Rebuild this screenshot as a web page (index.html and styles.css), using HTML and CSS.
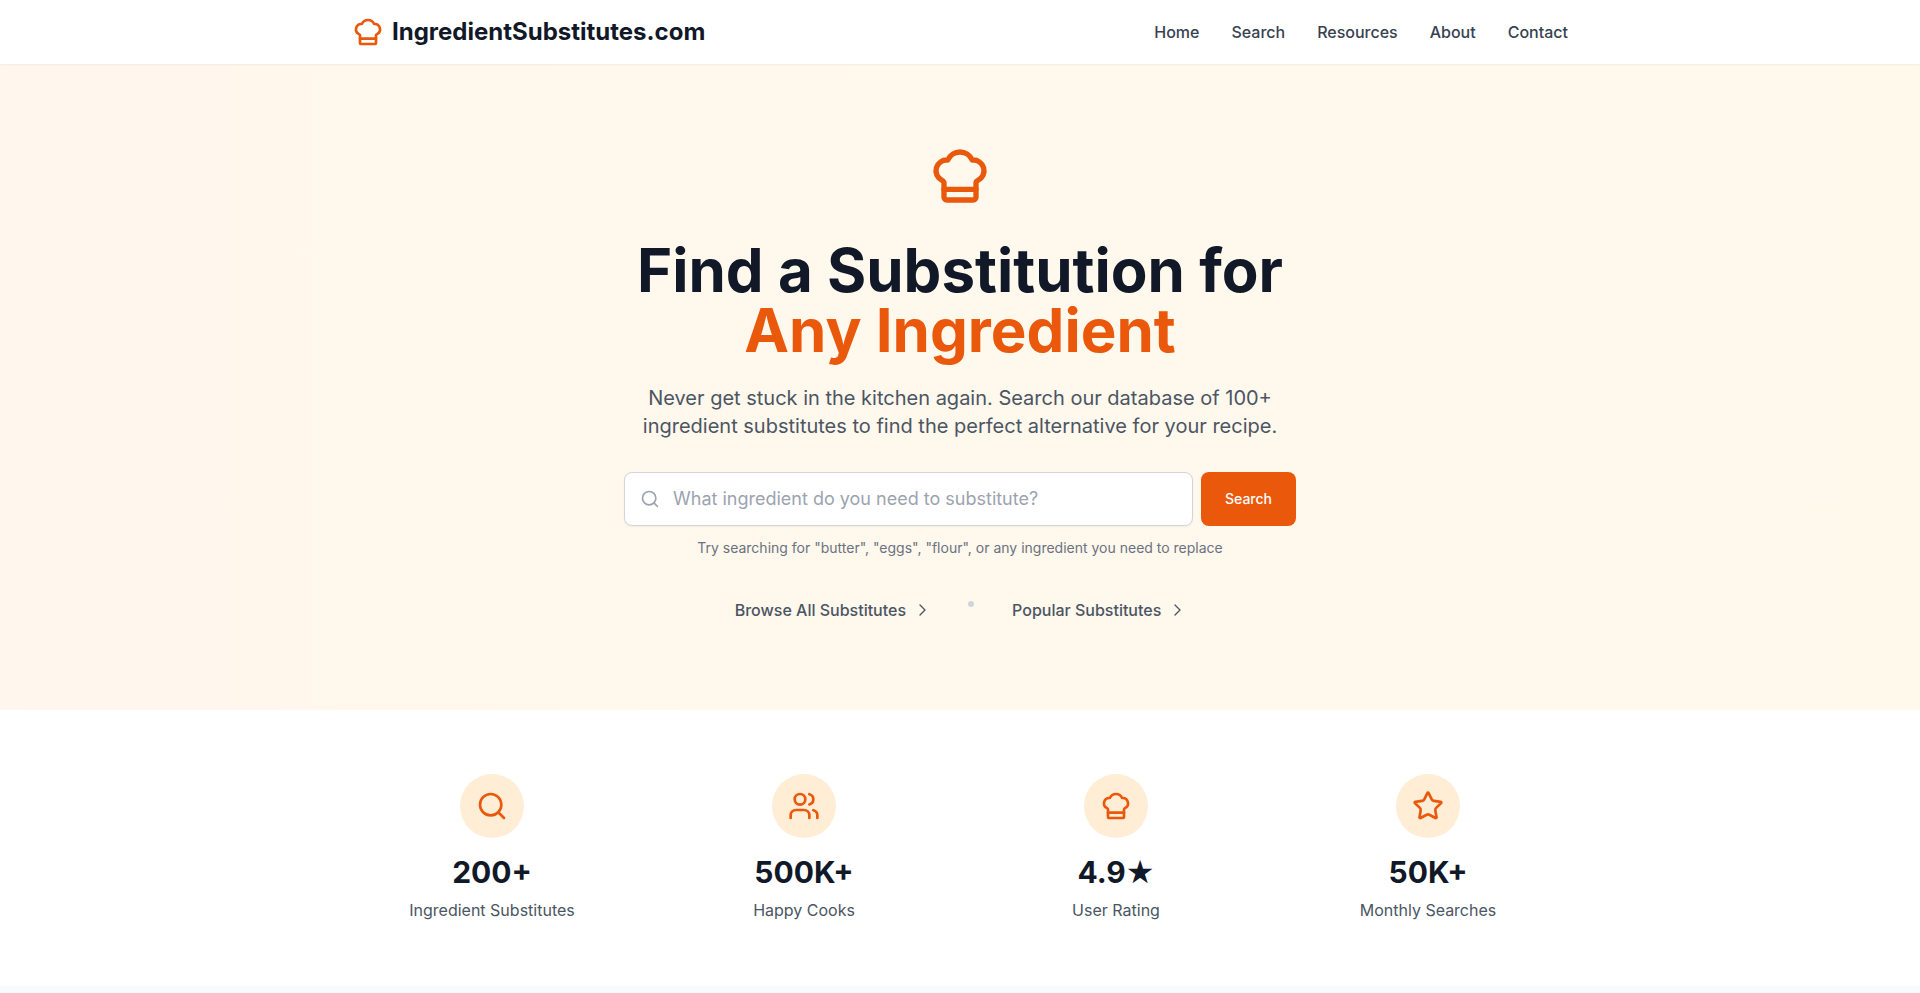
FILE: index.html
```html
<!DOCTYPE html>
<html lang="en">
<head>
<meta charset="utf-8">
<meta name="viewport" content="width=device-width, initial-scale=1">
<title>IngredientSubstitutes.com</title>
<link rel="stylesheet" href="styles.css">
</head>
<body>
<svg class="sprite" aria-hidden="true">
  <symbol id="chef" viewBox="0 0 24 24"><path d="M17 21a1 1 0 0 0 1-1v-5.35c0-.457.316-.844.727-1.041a4 4 0 0 0-2.134-7.589 5 5 0 0 0-9.186 0 4 4 0 0 0-2.134 7.588c.411.198.727.585.727 1.041V20a1 1 0 0 0 1 1Z"/><path d="M6 17h12"/></symbol>
  <symbol id="search" viewBox="0 0 24 24"><circle cx="11" cy="11" r="8"/><path d="m21 21-4.3-4.3"/></symbol>
  <symbol id="chevron" viewBox="0 0 24 24"><path d="m9 19.5 7.5-7.5L9 4.5"/></symbol>
  <symbol id="users" viewBox="0 0 24 24"><path d="M16 21v-2a4 4 0 0 0-4-4H6a4 4 0 0 0-4 4v2"/><circle cx="9" cy="7" r="4"/><path d="M22 21v-2a4 4 0 0 0-3-3.87"/><path d="M16 3.13a4 4 0 0 1 0 7.75"/></symbol>
  <symbol id="star" viewBox="0 0 24 24"><path d="M11.525 2.295a.53.53 0 0 1 .95 0l2.31 4.679a2.123 2.123 0 0 0 1.595 1.16l5.166.756a.53.53 0 0 1 .294.904l-3.736 3.638a2.123 2.123 0 0 0-.611 1.878l.882 5.14a.53.53 0 0 1-.771.56l-4.618-2.428a2.122 2.122 0 0 0-1.973 0L6.396 21.01a.53.53 0 0 1-.77-.56l.881-5.139a2.122 2.122 0 0 0-.611-1.879L2.16 9.795a.53.53 0 0 1 .294-.906l5.165-.755a2.122 2.122 0 0 0 1.597-1.16z"/></symbol>
</svg>

<header class="header">
  <div class="container header-row">
    <a class="brand" href="#"><svg class="icon icon-md accent" aria-hidden="true"><use href="#chef"/></svg>IngredientSubstitutes.com</a>
    <nav class="nav">
      <a href="#">Home</a>
      <a href="#">Search</a>
      <a href="#">Resources</a>
      <a href="#">About</a>
      <a href="#">Contact</a>
    </nav>
  </div>
</header>

<main>
  <section class="hero">
    <svg class="icon icon-xl accent" aria-hidden="true"><use href="#chef"/></svg>
    <h1 class="title">Find a Substitution for <span class="title-accent">Any Ingredient</span></h1>
    <p class="lead">Never get stuck in the kitchen again. Search our database of 100+ ingredient substitutes to find the perfect alternative for your recipe.</p>
    <form class="search">
      <div class="field">
        <svg class="icon icon-sm field-icon" aria-hidden="true"><use href="#search"/></svg>
        <input class="input" type="text" aria-label="Ingredient" placeholder="What ingredient do you need to substitute?">
      </div>
      <button class="submit" type="submit">Search</button>
    </form>
    <p class="hint">Try searching for "butter", "eggs", "flour", or any ingredient you need to replace</p>
    <div class="links">
      <a class="link" href="#">Browse All Substitutes<svg class="icon icon-xs" aria-hidden="true"><use href="#chevron"/></svg></a>
      <span class="dot"></span>
      <a class="link" href="#">Popular Substitutes<svg class="icon icon-xs" aria-hidden="true"><use href="#chevron"/></svg></a>
    </div>
  </section>

  <section class="stats">
    <div class="container stats-grid">
      <div class="stat">
        <div class="badge"><svg class="icon icon-md" aria-hidden="true"><use href="#search"/></svg></div>
        <div class="value">200+</div>
        <div class="label">Ingredient Substitutes</div>
      </div>
      <div class="stat">
        <div class="badge"><svg class="icon icon-md" aria-hidden="true"><use href="#users"/></svg></div>
        <div class="value">500K+</div>
        <div class="label">Happy Cooks</div>
      </div>
      <div class="stat">
        <div class="badge"><svg class="icon icon-md" aria-hidden="true"><use href="#chef"/></svg></div>
        <div class="value">4.9<span class="value-star">★</span></div>
        <div class="label">User Rating</div>
      </div>
      <div class="stat">
        <div class="badge"><svg class="icon icon-md" aria-hidden="true"><use href="#star"/></svg></div>
        <div class="value">50K+</div>
        <div class="label">Monthly Searches</div>
      </div>
    </div>
  </section>
</main>
</body>
</html>
```

FILE: styles.css
```css
*, *::before, *::after { box-sizing: border-box; }

body {
  margin: 0;
  min-height: 100vh;
  background: #f9fafb;
  color: #111827;
  font-family: Inter, sans-serif;
  font-size: 16px;
  line-height: 24px;
}

h1, p { margin: 0; }
a { color: inherit; text-decoration: none; }

.sprite { position: absolute; width: 0; height: 0; }

.icon {
  display: block;
  flex: none;
  fill: none;
  stroke: currentColor;
  stroke-width: 2;
  stroke-linecap: round;
  stroke-linejoin: round;
}
.icon-xs { width: 16px; height: 16px; }
.icon-sm { width: 20px; height: 20px; }
.icon-md { width: 32px; height: 32px; }
.icon-xl { width: 64px; height: 64px; }
.accent { color: #ea580c; }

.container {
  max-width: 1280px;
  margin: 0 auto;
  padding: 0 32px;
}

.header {
  position: relative;
  background: #fff;
  box-shadow: 0 1px 2px rgba(0, 0, 0, 0.05);
}
.header-row {
  display: flex;
  align-items: center;
  justify-content: space-between;
  min-height: 64px;
}
.brand {
  display: flex;
  align-items: center;
  gap: 8px;
  font-size: 24px;
  line-height: 32px;
  font-weight: 700;
}
.nav {
  display: flex;
  gap: 32px;
  color: #374151;
  font-weight: 500;
}

.hero {
  display: flex;
  flex-direction: column;
  align-items: center;
  padding: 80px 32px;
  background: linear-gradient(to right, #fff7ed, #fff9ec);
  text-align: center;
}
.title {
  margin-top: 32px;
  font-size: 60px;
  line-height: 60px;
  font-weight: 700;
}
.title-accent { display: block; color: #ea580c; }
.lead {
  max-width: 672px;
  margin-top: 24px;
  color: #4b5563;
  font-size: 20px;
  line-height: 28px;
}
.search {
  display: flex;
  gap: 8px;
  width: 100%;
  max-width: 672px;
  margin-top: 32px;
}
.field { position: relative; flex: 1; }
.field-icon {
  position: absolute;
  top: 17px;
  left: 16px;
  color: #9ca3af;
}
.input {
  display: block;
  width: 100%;
  padding: 12px 16px 12px 48px;
  border: 1px solid #d1d5db;
  border-radius: 8px;
  background: #fff;
  box-shadow: 0 1px 2px rgba(0, 0, 0, 0.05);
  color: inherit;
  font: inherit;
  font-size: 18px;
  line-height: 28px;
}
.input::placeholder { color: #9ca3af; }
.submit {
  padding: 0 24px;
  border: 0;
  border-radius: 8px;
  background: #ea580c;
  color: #fff;
  font: inherit;
  font-size: 14px;
  font-weight: 500;
}
.hint {
  margin-top: 12px;
  color: #6b7280;
  font-size: 14px;
  line-height: 20px;
}
.links {
  display: flex;
  gap: 22px;
  margin-top: 32px;
}
.link {
  display: flex;
  align-items: center;
  gap: 8px;
  padding: 8px 16px;
  color: #4b5563;
  font-weight: 500;
}
.dot {
  width: 6px;
  height: 6px;
  margin-top: 11px;
  border-radius: 50%;
  background: #d1d5db;
}

.stats { padding: 64px 0; background: #fff; }
.stats-grid {
  display: grid;
  grid-template-columns: repeat(4, 1fr);
  gap: 32px;
}
.stat {
  display: flex;
  flex-direction: column;
  align-items: center;
}
.badge {
  display: flex;
  align-items: center;
  justify-content: center;
  width: 64px;
  height: 64px;
  margin-bottom: 16px;
  border-radius: 50%;
  background: #ffedd5;
  color: #ea580c;
}
.value {
  margin-bottom: 8px;
  font-size: 30px;
  line-height: 36px;
  font-weight: 700;
}
.value-star {
  font-family: "DejaVu Sans", sans-serif;
  font-size: 32px;
  line-height: 1;
}
.label { color: #4b5563; }
```
